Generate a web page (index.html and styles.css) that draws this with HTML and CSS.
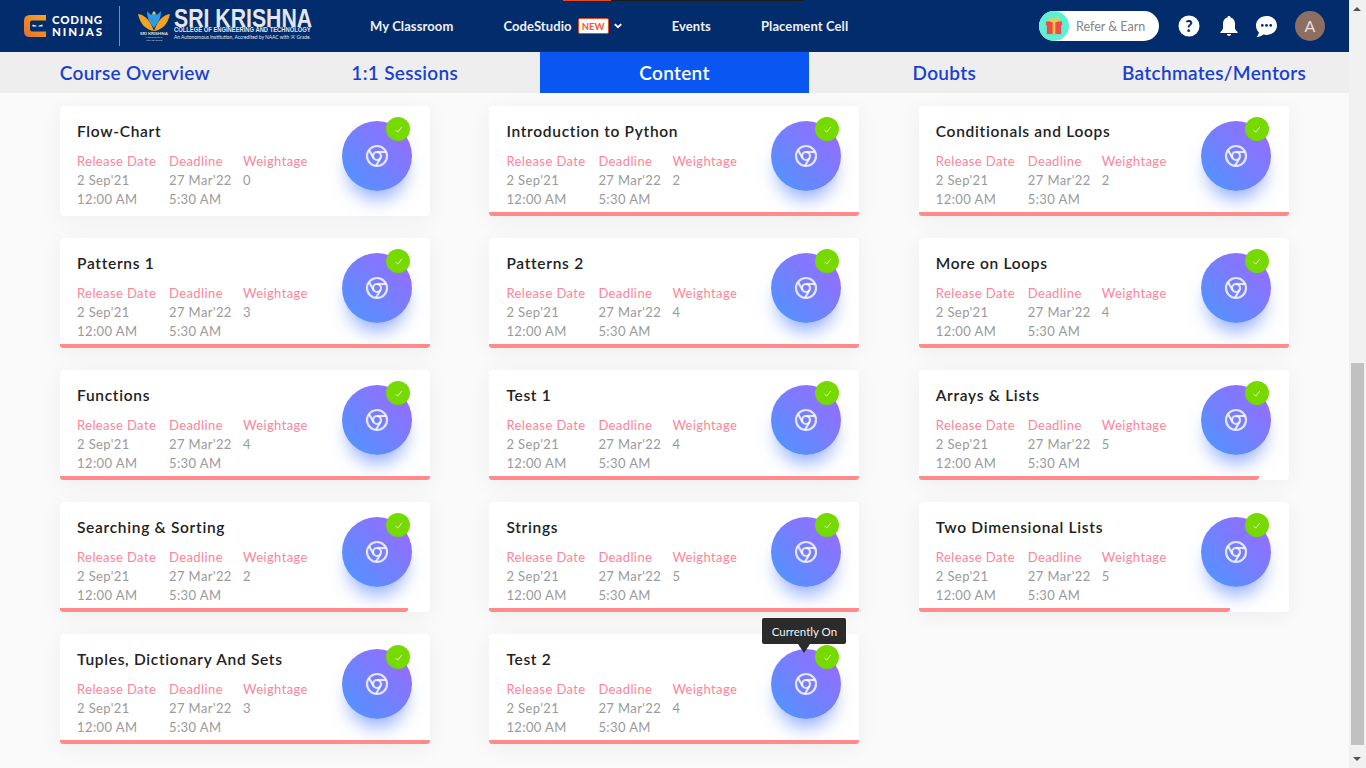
FILE: index.html
```html
<!DOCTYPE html>
<html lang="en">
<head>
  <meta charset="UTF-8">
  <meta name="viewport" content="width=device-width, initial-scale=1">
  <title>Course Content</title>
  <link rel="stylesheet" href="styles.css">
</head>
<body>
  <svg class="defs" width="0" height="0">
    <symbol id="chrome" viewBox="0 0 24 24">
      <circle cx="12" cy="12" r="10"/>
      <circle cx="12" cy="12" r="4"/>
      <line x1="21.17" y1="8" x2="12" y2="8"/>
      <line x1="3.95" y1="6.06" x2="8.54" y2="14"/>
      <line x1="10.88" y1="21.94" x2="15.46" y2="14"/>
    </symbol>
    <symbol id="tick" viewBox="0 0 12 12">
      <path d="M2 6.5 L5 9.5 L10.5 2.5"/>
    </symbol>
  </svg>

  <div class="page">
    <div class="main">
      <div class="topline"><span class="topline-a"></span><span class="topline-b"></span></div>
      <header class="header">
        <div class="brand">
          <svg class="cn-logo" viewBox="0 0 22 22" width="22" height="22">
            <defs>
              <linearGradient id="cnGrad" x1="0" y1="1" x2="1" y2="0">
                <stop offset="0" stop-color="#e56f30"/>
                <stop offset="1" stop-color="#f6a81c"/>
              </linearGradient>
            </defs>
            <path fill="url(#cnGrad)" d="M6 0 H22 V5.500 H8 Q6 5.500 6 7.500 V14.500 Q6 16.500 8 16.500 H22 V22 H6 Q0 22 0 16 V6 Q0 0 6 0 Z"/>
            <path fill="#fff" d="M8.500 9.500 L12.500 10.700 V11.500 H8.500 Z M14.500 10.700 L18.500 9.500 V11.500 H14.500 Z"/>
          </svg>
          <div class="cn-name"><span class="cn-top">CODING</span><br><span class="cn-bottom">NINJAS</span></div>
          <div class="divider"></div>
          <div class="college-mark">
            <svg viewBox="0 0 32 21" width="32" height="21">
              <path fill="#f2a122" d="M0 4 C7 5 12 10 16 21 C8 20 2 14 0 4 Z"/>
              <path fill="#f2a122" d="M32 4 C25 5 20 10 16 21 C24 20 30 14 32 4 Z"/>
              <path fill="#2f9be0" d="M9 1 L13 5 L16 1 L19 5 L23 1 C23 9 20 13 16 18 C12 13 9 9 9 1 Z"/>
              <circle cx="16" cy="3" r="1.5" fill="#f2c522"/>
            </svg>
            <div class="college-mini">SRI KRISHNA</div>
            <div class="college-micro">INSTITUTIONS<br>COIMBATORE</div>
          </div>
          <div class="college-text">
            <div class="college-name">SRI KRISHNA</div>
            <div class="college-sub">COLLEGE OF ENGINEERING AND TECHNOLOGY</div>
            <div class="college-note">An Autonomous Institution, Accredited by NAAC with 'A' Grade.</div>
          </div>
        </div>
        <nav class="nav">
          <a>My Classroom</a>
          <a class="nav-studio">CodeStudio <span class="new-badge">NEW</span>
            <svg class="chev" viewBox="0 0 10 7" width="8" height="6"><path d="M1 1.2 L5 5 L9 1.2"/></svg>
          </a>
          <a>Events</a>
          <a>Placement Cell</a>
        </nav>
        <div class="header-right">
          <div class="refer">
            <span class="gift">
              <svg viewBox="0 0 20 20" width="18" height="18">
                <rect x="2" y="8" width="16" height="11" fill="#f04a4a"/>
                <rect x="1" y="5" width="18" height="4" fill="#f04a4a"/>
                <rect x="8.5" y="5" width="3" height="14" fill="#f7c93e"/>
                <path d="M10 5 C6 5 4 3 5 1.5 C6.5 0 9 2 10 5 C11 2 13.5 0 15 1.5 C16 3 14 5 10 5 Z" fill="none" stroke="#f7c93e" stroke-width="1.5"/>
              </svg>
            </span>
            <span class="refer-text">Refer &amp; Earn</span>
          </div>
          <svg class="icon-help" viewBox="0 0 22 22" width="22" height="22">
            <circle cx="11" cy="11" r="10.5" fill="#fff"/>
            <text x="11" y="16.5" text-anchor="middle" class="help-mark">?</text>
          </svg>
          <svg class="icon-bell" viewBox="0 0 18 20" width="18" height="20">
            <path fill="#fff" d="M9 0 C10 0 10.6 .7 10.6 1.6 C13.4 2.3 15 4.6 15 7.6 V12 C15 13.6 16 14.6 17.6 16 V17 H.4 V16 C2 14.6 3 13.6 3 12 V7.6 C3 4.6 4.6 2.3 7.4 1.6 C7.4 .7 8 0 9 0 Z"/>
            <path fill="#fff" d="M6.8 18 H11.2 C11 19.3 10.1 20 9 20 C7.9 20 7 19.3 6.8 18 Z"/>
          </svg>
          <svg class="icon-chat" viewBox="0 0 20 20" width="21" height="21">
            <path fill="#fff" d="M10 0 C15.5 0 20 3.9 20 9 C20 14.1 15.5 18 10 18 C9 18 8 17.9 7 17.6 C5.500 19 3 20 .5 20 C1.800 18.700 2.600 17.300 2.700 15.500 C1 13.900 0 11.600 0 9 C0 3.900 4.500 0 10 0 Z"/>
            <circle cx="6" cy="9" r="1.300" fill="#022c6b"/>
            <circle cx="10" cy="9" r="1.300" fill="#022c6b"/>
            <circle cx="14" cy="9" r="1.300" fill="#022c6b"/>
          </svg>
          <div class="avatar">A</div>
        </div>
      </header>

      <div class="tabs">
        <div class="tab">Course Overview</div>
        <div class="tab">1:1 Sessions</div>
        <div class="tab tab-active">Content</div>
        <div class="tab">Doubts</div>
        <div class="tab">Batchmates/Mentors</div>
      </div>

      <div class="cards">
        <div class="card">
          <div class="card-info">
            <h3>Flow-Chart</h3>
            <div class="dates">
              <span class="lbl">Release Date</span><span class="lbl">Deadline</span><span class="lbl">Weightage</span>
              <span>2 Sep'21</span><span>27 Mar'22</span><span>0</span>
              <span>12:00 AM</span><span>5:30 AM</span><span></span>
            </div>
          </div>
          <div class="orb"><svg class="orb-icon"><use href="#chrome"/></svg><span class="done"><svg class="tick"><use href="#tick"/></svg></span></div>
        </div>
        <div class="card">
          <div class="card-info">
            <h3>Introduction to Python</h3>
            <div class="dates">
              <span class="lbl">Release Date</span><span class="lbl">Deadline</span><span class="lbl">Weightage</span>
              <span>2 Sep'21</span><span>27 Mar'22</span><span>2</span>
              <span>12:00 AM</span><span>5:30 AM</span><span></span>
            </div>
          </div>
          <div class="orb"><svg class="orb-icon"><use href="#chrome"/></svg><span class="done"><svg class="tick"><use href="#tick"/></svg></span></div>
          <div class="bar" style="width: 100%"></div>
        </div>
        <div class="card">
          <div class="card-info">
            <h3>Conditionals and Loops</h3>
            <div class="dates">
              <span class="lbl">Release Date</span><span class="lbl">Deadline</span><span class="lbl">Weightage</span>
              <span>2 Sep'21</span><span>27 Mar'22</span><span>2</span>
              <span>12:00 AM</span><span>5:30 AM</span><span></span>
            </div>
          </div>
          <div class="orb"><svg class="orb-icon"><use href="#chrome"/></svg><span class="done"><svg class="tick"><use href="#tick"/></svg></span></div>
          <div class="bar" style="width: 100%"></div>
        </div>

        <div class="card">
          <div class="card-info">
            <h3>Patterns 1</h3>
            <div class="dates">
              <span class="lbl">Release Date</span><span class="lbl">Deadline</span><span class="lbl">Weightage</span>
              <span>2 Sep'21</span><span>27 Mar'22</span><span>3</span>
              <span>12:00 AM</span><span>5:30 AM</span><span></span>
            </div>
          </div>
          <div class="orb"><svg class="orb-icon"><use href="#chrome"/></svg><span class="done"><svg class="tick"><use href="#tick"/></svg></span></div>
          <div class="bar" style="width: 100%"></div>
        </div>
        <div class="card">
          <div class="card-info">
            <h3>Patterns 2</h3>
            <div class="dates">
              <span class="lbl">Release Date</span><span class="lbl">Deadline</span><span class="lbl">Weightage</span>
              <span>2 Sep'21</span><span>27 Mar'22</span><span>4</span>
              <span>12:00 AM</span><span>5:30 AM</span><span></span>
            </div>
          </div>
          <div class="orb"><svg class="orb-icon"><use href="#chrome"/></svg><span class="done"><svg class="tick"><use href="#tick"/></svg></span></div>
          <div class="bar" style="width: 100%"></div>
        </div>
        <div class="card">
          <div class="card-info">
            <h3>More on Loops</h3>
            <div class="dates">
              <span class="lbl">Release Date</span><span class="lbl">Deadline</span><span class="lbl">Weightage</span>
              <span>2 Sep'21</span><span>27 Mar'22</span><span>4</span>
              <span>12:00 AM</span><span>5:30 AM</span><span></span>
            </div>
          </div>
          <div class="orb"><svg class="orb-icon"><use href="#chrome"/></svg><span class="done"><svg class="tick"><use href="#tick"/></svg></span></div>
          <div class="bar" style="width: 100%"></div>
        </div>

        <div class="card">
          <div class="card-info">
            <h3>Functions</h3>
            <div class="dates">
              <span class="lbl">Release Date</span><span class="lbl">Deadline</span><span class="lbl">Weightage</span>
              <span>2 Sep'21</span><span>27 Mar'22</span><span>4</span>
              <span>12:00 AM</span><span>5:30 AM</span><span></span>
            </div>
          </div>
          <div class="orb"><svg class="orb-icon"><use href="#chrome"/></svg><span class="done"><svg class="tick"><use href="#tick"/></svg></span></div>
          <div class="bar" style="width: 100%"></div>
        </div>
        <div class="card">
          <div class="card-info">
            <h3>Test 1</h3>
            <div class="dates">
              <span class="lbl">Release Date</span><span class="lbl">Deadline</span><span class="lbl">Weightage</span>
              <span>2 Sep'21</span><span>27 Mar'22</span><span>4</span>
              <span>12:00 AM</span><span>5:30 AM</span><span></span>
            </div>
          </div>
          <div class="orb"><svg class="orb-icon"><use href="#chrome"/></svg><span class="done"><svg class="tick"><use href="#tick"/></svg></span></div>
          <div class="bar" style="width: 100%"></div>
        </div>
        <div class="card">
          <div class="card-info">
            <h3>Arrays &amp; Lists</h3>
            <div class="dates">
              <span class="lbl">Release Date</span><span class="lbl">Deadline</span><span class="lbl">Weightage</span>
              <span>2 Sep'21</span><span>27 Mar'22</span><span>5</span>
              <span>12:00 AM</span><span>5:30 AM</span><span></span>
            </div>
          </div>
          <div class="orb"><svg class="orb-icon"><use href="#chrome"/></svg><span class="done"><svg class="tick"><use href="#tick"/></svg></span></div>
          <div class="bar" style="width: 92%"></div>
        </div>

        <div class="card">
          <div class="card-info">
            <h3>Searching &amp; Sorting</h3>
            <div class="dates">
              <span class="lbl">Release Date</span><span class="lbl">Deadline</span><span class="lbl">Weightage</span>
              <span>2 Sep'21</span><span>27 Mar'22</span><span>2</span>
              <span>12:00 AM</span><span>5:30 AM</span><span></span>
            </div>
          </div>
          <div class="orb"><svg class="orb-icon"><use href="#chrome"/></svg><span class="done"><svg class="tick"><use href="#tick"/></svg></span></div>
          <div class="bar" style="width: 94%"></div>
        </div>
        <div class="card">
          <div class="card-info">
            <h3>Strings</h3>
            <div class="dates">
              <span class="lbl">Release Date</span><span class="lbl">Deadline</span><span class="lbl">Weightage</span>
              <span>2 Sep'21</span><span>27 Mar'22</span><span>5</span>
              <span>12:00 AM</span><span>5:30 AM</span><span></span>
            </div>
          </div>
          <div class="orb"><svg class="orb-icon"><use href="#chrome"/></svg><span class="done"><svg class="tick"><use href="#tick"/></svg></span></div>
          <div class="bar" style="width: 100%"></div>
        </div>
        <div class="card">
          <div class="card-info">
            <h3>Two Dimensional Lists</h3>
            <div class="dates">
              <span class="lbl">Release Date</span><span class="lbl">Deadline</span><span class="lbl">Weightage</span>
              <span>2 Sep'21</span><span>27 Mar'22</span><span>5</span>
              <span>12:00 AM</span><span>5:30 AM</span><span></span>
            </div>
          </div>
          <div class="orb"><svg class="orb-icon"><use href="#chrome"/></svg><span class="done"><svg class="tick"><use href="#tick"/></svg></span></div>
          <div class="bar" style="width: 84%"></div>
        </div>

        <div class="card">
          <div class="card-info">
            <h3>Tuples, Dictionary And Sets</h3>
            <div class="dates">
              <span class="lbl">Release Date</span><span class="lbl">Deadline</span><span class="lbl">Weightage</span>
              <span>2 Sep'21</span><span>27 Mar'22</span><span>3</span>
              <span>12:00 AM</span><span>5:30 AM</span><span></span>
            </div>
          </div>
          <div class="orb"><svg class="orb-icon"><use href="#chrome"/></svg><span class="done"><svg class="tick"><use href="#tick"/></svg></span></div>
          <div class="bar" style="width: 100%"></div>
        </div>
        <div class="card">
          <div class="card-info">
            <h3>Test 2</h3>
            <div class="dates">
              <span class="lbl">Release Date</span><span class="lbl">Deadline</span><span class="lbl">Weightage</span>
              <span>2 Sep'21</span><span>27 Mar'22</span><span>4</span>
              <span>12:00 AM</span><span>5:30 AM</span><span></span>
            </div>
          </div>
          <div class="orb">
            <svg class="orb-icon"><use href="#chrome"/></svg>
            <span class="done"><svg class="tick"><use href="#tick"/></svg></span>
            <div class="tooltip">Currently On</div>
          </div>
          <div class="bar" style="width: 100%"></div>
        </div>
      </div>
    </div>

    <div class="scrollbar">
      <span class="arrow-up"></span>
      <div class="thumb"></div>
      <span class="arrow-down"></span>
    </div>
  </div>
</body>
</html>
```

FILE: styles.css
```css
* {
  box-sizing: border-box;
}
html, body {
  margin: 0;
  padding: 0;
  height: 100%;
  overflow: hidden;
}
body {
  background: #fafafa;
  font-family: 'Lato', 'Open Sans', sans-serif;
  color: #222;
}
.defs {
  position: absolute;
}
.page {
  display: flex;
  height: 768px;
}
.main {
  position: relative;
  flex: 1;
  min-width: 0;
}

/* thin strip at the very top */
.topline {
  position: absolute;
  top: 0;
  left: 563px;
  display: flex;
  height: 1px;
}
.topline-a {
  width: 48px;
  background: #e8481c;
}
.topline-b {
  width: 192px;
  background: #1c1c1c;
}

/* header */
.header {
  display: flex;
  align-items: center;
  height: 52px;
  background: #022c6b;
}
.brand {
  display: flex;
  align-items: center;
  width: 370px;
  padding-left: 24px;
  flex-shrink: 0;
}
.cn-logo {
  flex-shrink: 0;
}
.cn-name {
  margin-left: 6px;
  width: 67px;
  font-size: 11.5px;
  line-height: 12px;
  font-weight: 900;
  color: #fff;
}
.cn-top {
  letter-spacing: .8px;
}
.cn-bottom {
  letter-spacing: 1.9px;
}
.divider {
  width: 1px;
  height: 40px;
  background: #7e8fae;
}
.college-mark {
  margin-left: 18px;
  width: 32px;
  text-align: center;
  color: #ddd;
}
.college-mark svg {
  display: block;
}
.college-mini {
  font-size: 4.5px;
  line-height: 5px;
  font-weight: 900;
  white-space: nowrap;
}
.college-micro {
  font-size: 2.5px;
  line-height: 3px;
}
.college-text {
  margin: -1px 0 0 4px;
  color: #e4e6ea;
  white-space: nowrap;
}
.college-name {
  font-family: 'Liberation Sans', sans-serif;
  font-size: 25px;
  line-height: 16px;
  font-weight: 700;
  transform: scaleX(.85);
  transform-origin: left center;
}
.college-sub {
  font-family: 'Liberation Sans', sans-serif;
  font-size: 7px;
  line-height: 7px;
  font-weight: 700;
  transform: scaleX(.83);
  transform-origin: left center;
}
.college-note {
  font-size: 4.9px;
  line-height: 8px;
}
.nav {
  display: flex;
  align-items: center;
  gap: 50px;
  font-size: 13px;
  font-weight: 700;
  letter-spacing: .1px;
  color: #eef0f4;
  white-space: nowrap;
}
.nav-studio {
  display: flex;
  align-items: center;
  gap: 5px;
}
.new-badge {
  width: 31px;
  height: 16px;
  margin-left: 1px;
  line-height: 15px;
  text-align: center;
  background: #fff;
  border: 1px solid #e8481c;
  border-radius: 2px;
  color: #f0572b;
  font-size: 9.5px;
  font-weight: 700;
}
.chev {
  fill: none;
  stroke: #fff;
  stroke-width: 2.4;
}
.header-right {
  display: flex;
  align-items: center;
  margin-left: auto;
  padding-right: 24px;
}
.refer {
  display: flex;
  align-items: center;
  width: 120px;
  height: 30px;
  background: #fff;
  border-radius: 15px;
}
.gift {
  display: flex;
  align-items: center;
  justify-content: center;
  width: 30px;
  height: 30px;
  border-radius: 50%;
  background: #5df0d3;
}
.refer-text {
  margin-left: 7px;
  font-size: 12.5px;
  color: #858585;
  white-space: nowrap;
}
.icon-help {
  margin-left: 19px;
}
.help-mark {
  font-size: 16px;
  font-weight: 900;
  fill: #022c6b;
}
.icon-bell {
  margin-left: 20px;
}
.icon-chat {
  margin-left: 18px;
}
.avatar {
  margin-left: 18px;
  width: 30px;
  height: 30px;
  border-radius: 50%;
  background: #8d6e63;
  color: #e6dedb;
  font-size: 16px;
  line-height: 30px;
  text-align: center;
}

/* tabs */
.tabs {
  display: grid;
  grid-template-columns: repeat(5, 1fr);
  height: 41px;
  background: #eeeeee;
}
.tab {
  font-size: 19px;
  font-weight: 600;
  line-height: 41px;
  letter-spacing: .3px;
  text-align: center;
  color: #1a3fd4;
  white-space: nowrap;
}
.tab-active {
  background: #0a56f2;
  color: #fff;
}

/* cards */
.cards {
  display: grid;
  grid-template-columns: repeat(3, 370px);
  column-gap: 59.4px;
  row-gap: 22px;
  padding: 13px 0 0 60px;
}
.card {
  position: relative;
  display: flex;
  justify-content: space-between;
  height: 110px;
  padding: 15px 18px 0 17px;
  background: #fff;
  border-radius: 4px;
  box-shadow: 0 4px 22px rgba(0, 0, 0, .05);
}
.card h3 {
  margin: 0 0 11px;
  font-size: 15.5px;
  line-height: 20px;
  font-weight: 600;
  letter-spacing: .7px;
  color: #222;
}
.dates {
  display: grid;
  grid-template-columns: 92px 74px auto;
  font-size: 13px;
  line-height: 19px;
  letter-spacing: .4px;
  color: #9a9a9a;
}
.lbl {
  color: #ff8499;
}
.orb {
  position: relative;
  align-self: flex-start;
  width: 70px;
  height: 70px;
  border-radius: 50%;
  background: linear-gradient(225deg, #a066ff, #4a98ff);
  box-shadow: 0 14px 18px -6px rgba(60, 110, 255, .55);
}
.orb-icon {
  position: absolute;
  top: 23px;
  left: 23px;
  width: 24px;
  height: 24px;
  fill: none;
  stroke: rgba(255, 255, 255, .8);
  stroke-width: 2.2;
}
.done {
  position: absolute;
  top: -4px;
  right: 2px;
  display: flex;
  align-items: center;
  justify-content: center;
  width: 24px;
  height: 24px;
  border-radius: 50%;
  background: #76d900;
}
.tick {
  width: 9px;
  height: 9px;
  fill: none;
  stroke: #e8f8d0;
  stroke-width: 1.2;
}
.bar {
  position: absolute;
  left: 0;
  bottom: 0;
  height: 4px;
  background: #ff8b8b;
  border-radius: 0 0 3px 3px;
}
.tooltip {
  position: absolute;
  top: -31px;
  left: -9px;
  width: 84px;
  height: 26px;
  background: #2b2b2b;
  border-radius: 2px;
  color: #f2f2f2;
  font-size: 11.5px;
  line-height: 27px;
  text-align: center;
  white-space: nowrap;
}
.tooltip::after {
  content: "";
  position: absolute;
  top: 26px;
  left: 36px;
  border-left: 6px solid transparent;
  border-right: 6px solid transparent;
  border-top: 9px solid #2b2b2b;
}

/* scrollbar, drawn by hand so it shows in the picture */
.scrollbar {
  position: relative;
  width: 17px;
  flex-shrink: 0;
  background: #f1f1f1;
}
.thumb {
  margin: 363px 2px 0;
  height: 382px;
  background: #c1c1c1;
}
.arrow-up, .arrow-down {
  position: absolute;
  left: 4px;
  border-left: 4px solid transparent;
  border-right: 4px solid transparent;
}
.arrow-up {
  top: 7px;
  border-bottom: 4px solid #505050;
}
.arrow-down {
  bottom: 7px;
  border-top: 4px solid #505050;
}
```
